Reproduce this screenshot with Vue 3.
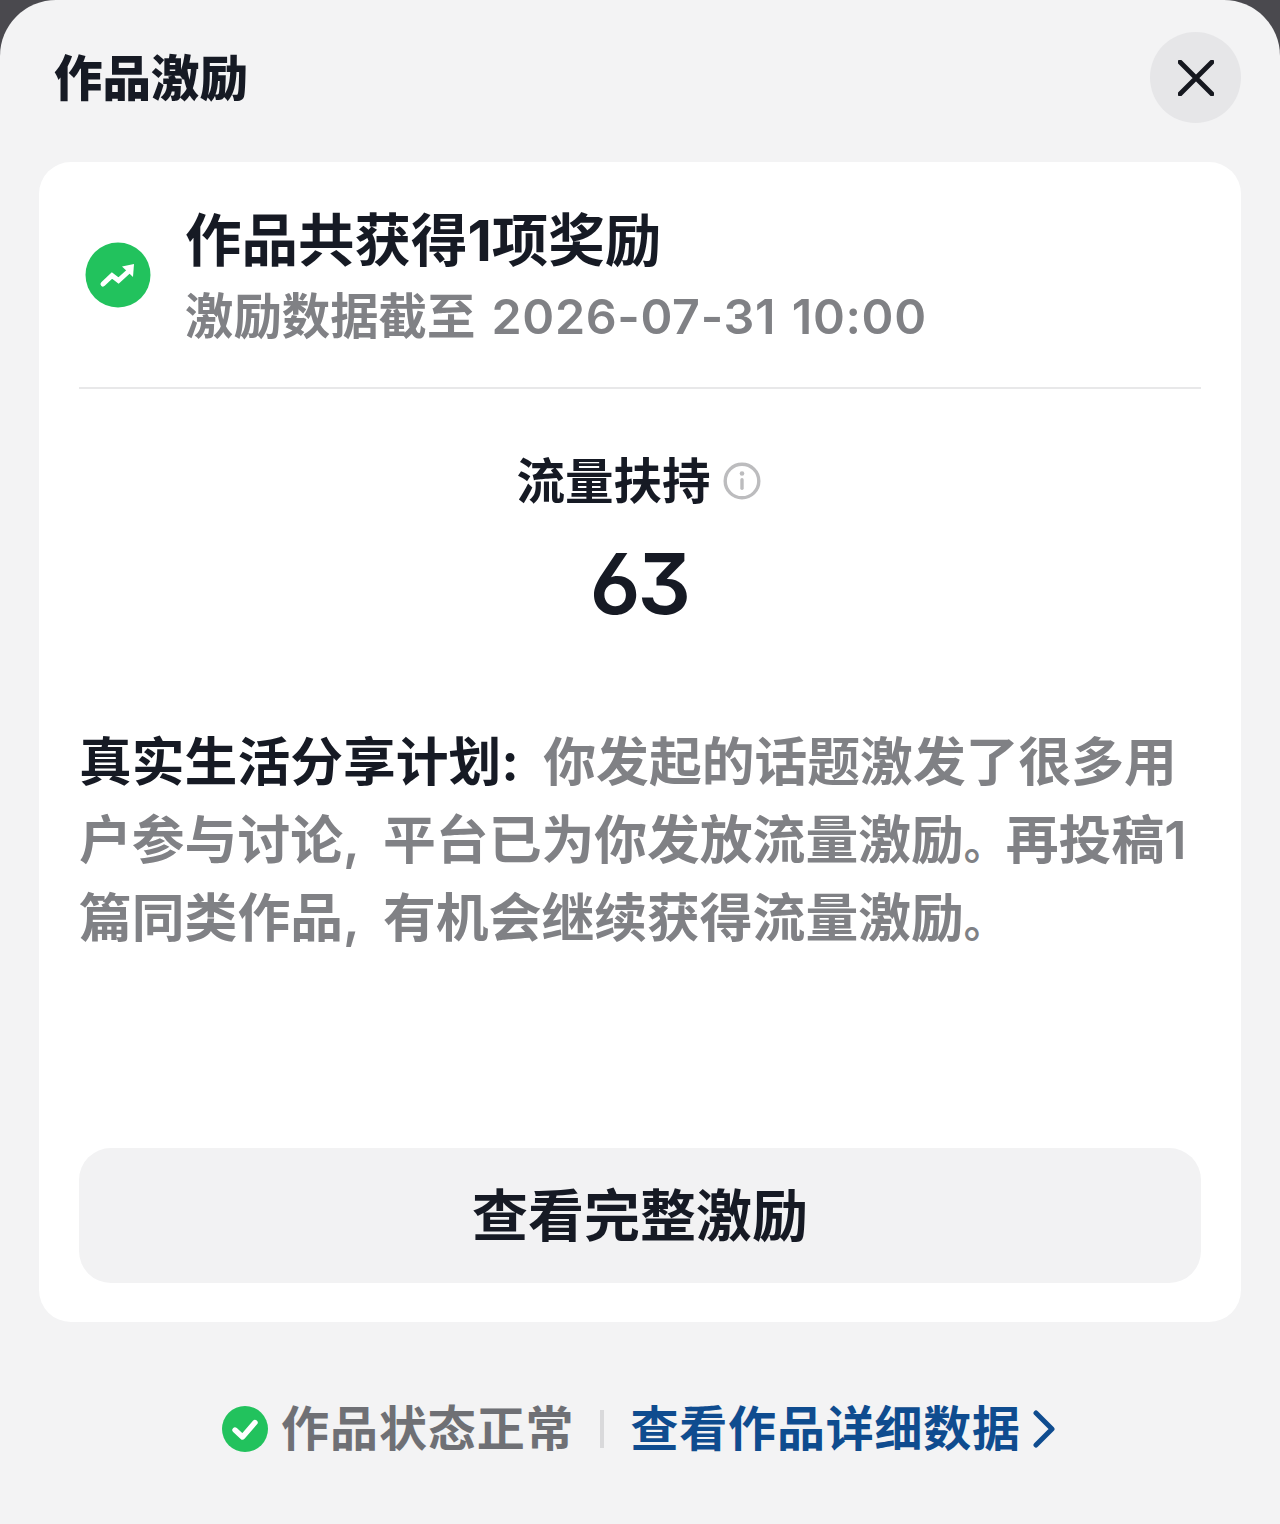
<script setup>
</script>

<template>
  <div class="page">
    <div class="sheet">
      <header class="head">
        <h1 class="title">作品激励</h1>
        <button class="close" aria-label="关闭">
          <svg width="36" height="36" viewBox="0 0 36 36"><path d="M2 2 L34 34 M34 2 L2 34" stroke="#16181f" stroke-width="4.8" stroke-linecap="round" fill="none"/></svg>
        </button>
      </header>
      <section class="card">
        <div class="summary">
          <svg class="trend" width="66" height="66" viewBox="0 0 66 66">
            <circle cx="33" cy="33" r="32.5" fill="#22c25d"/>
            <path d="M18 42 L27 33.5 L33.5 38.5 L44 29" stroke="#fff" stroke-width="5" stroke-linecap="round" stroke-linejoin="miter" fill="none"/>
            <path d="M37 24.5 L49 22 L48 35 Z" fill="#fff"/>
          </svg>
          <div class="summary-text">
            <div class="summary-title">作品共获得1项奖励</div>
            <div class="summary-sub">激励数据截至 <span class="nums">2026-07-31 10:00</span></div>
          </div>
        </div>
        <div class="metric">
          <div class="metric-label">
            <span class="metric-name">流量扶持</span>
            <svg width="38" height="38" viewBox="0 0 38 38">
              <circle cx="19" cy="19" r="16.8" fill="none" stroke="#bcbcbe" stroke-width="3.4"/>
              <circle cx="19" cy="11.5" r="2.3" fill="#bcbcbe"/>
              <rect x="17.3" y="16" width="3.4" height="12" rx="1.7" fill="#bcbcbe"/>
            </svg>
          </div>
          <div class="metric-value">63</div>
        </div>
        <p class="desc"><b>真实生活分享计划:</b> 你发起的话题激发了很多用户参与讨论, 平台已为你发放流量激励<span class="stop">。</span>再投稿1篇同类作品, 有机会继续获得流量激励<span class="stop">。</span></p>
        <button class="action">查看完整激励</button>
      </section>
      <footer class="foot">
        <svg width="46" height="46" viewBox="0 0 46 46">
          <circle cx="23" cy="23" r="23" fill="#22c25d"/>
          <path d="M13 24 L20.5 31 L33 16.5" stroke="#fff" stroke-width="5.4" stroke-linecap="round" stroke-linejoin="round" fill="none"/>
        </svg>
        <span class="status">作品状态正常</span>
        <i class="sep"></i>
        <a class="link">查看作品详细数据</a>
        <svg class="chev" width="22" height="38" viewBox="0 0 22 38"><path d="M3 3 L19 19 L3 35" stroke="#0f4c8f" stroke-width="5" stroke-linecap="round" stroke-linejoin="round" fill="none"/></svg>
      </footer>
    </div>
  </div>
</template>

<style scoped>
.page {
  width: 1280px;
  height: 1524px;
  background: #4a494e;
  font-family: Inter, "Noto Sans CJK SC", sans-serif;
  color: #161a24;
}
.sheet {
  height: 1524px;
  box-sizing: border-box;
  background: #f3f3f4;
  border-radius: 56px 56px 0 0;
  padding: 32px 39px 0;
}
.head {
  display: flex;
  align-items: center;
  justify-content: space-between;
  height: 91px;
  padding-left: 15px;
}
.title {
  margin: 0;
  padding-top: 2px;
  font-size: 48.5px;
  font-weight: 900;
  line-height: 91px;
}
.close {
  width: 91px;
  height: 91px;
  border: 0;
  padding: 0;
  border-radius: 50%;
  background: #e6e6e8;
  display: flex;
  align-items: center;
  justify-content: center;
}
.card {
  margin-top: 39px;
  height: 1160px;
  box-sizing: border-box;
  background: #fff;
  border-radius: 32px;
  padding: 0 40px;
  display: flex;
  flex-direction: column;
}
.summary {
  display: flex;
  align-items: center;
  gap: 34px;
  height: 227px;
  border-bottom: 2px solid #e8e8e9;
  box-sizing: border-box;
  padding-left: 6px;
}
.summary-text {
  padding-top: 8px;
}
.summary-title {
  font-size: 56.5px;
  font-weight: 700;
  line-height: 76px;
}
.summary-sub {
  font-size: 48.4px;
  font-weight: 600;
  line-height: 76px;
  color: #808185;
}
.nums {
  margin-left: 4px;
  letter-spacing: 0.65px;
  word-spacing: 3px;
}
.metric {
  margin-top: 57px;
  text-align: center;
}
.metric-label {
  display: flex;
  justify-content: center;
  align-items: center;
  gap: 12px;
  padding-right: 3px;
  font-size: 48.5px;
  font-weight: 700;
  line-height: 68px;
}
.metric-name {
  padding-top: 2px;
}
.metric-value {
  font-size: 84px;
  font-weight: 600;
  line-height: 104px;
  letter-spacing: -3px;
  margin-top: 16px;
  padding-right: 2px;
  font-feature-settings: "cv03", "cv09";
}
.desc {
  margin: 87px 0 0;
  font-size: 52.8px;
  font-weight: 600;
  line-height: 78px;
  word-spacing: 11px;
  color: #808185;
}
.desc b {
  font-weight: 700;
  color: #161a24;
}
.stop {
  font-size: 42px;
  line-height: 0;
}
.action {
  margin-top: auto;
  margin-bottom: 39px;
  height: 135px;
  border: 0;
  border-radius: 32px;
  background: #f2f2f3;
  font-family: inherit;
  font-size: 56px;
  font-weight: 600;
  color: #161a24;
  padding: 0 0 8px;
}
.foot {
  display: flex;
  align-items: center;
  justify-content: center;
  margin-top: 73px;
  height: 68px;
  padding-right: 3px;
}
.status {
  margin-left: 13px;
  padding-bottom: 8px;
  font-size: 48px;
  font-weight: 600;
  color: #6f7075;
  letter-spacing: 0.9px;
}
.sep {
  width: 4px;
  height: 38px;
  background: #d9d9db;
  margin: 0 27px 0 25px;
}
.link {
  padding-bottom: 8px;
  font-size: 48px;
  font-weight: 700;
  color: #0f4c8f;
  letter-spacing: 0.8px;
}
.chev {
  margin-left: 12px;
}
</style>
